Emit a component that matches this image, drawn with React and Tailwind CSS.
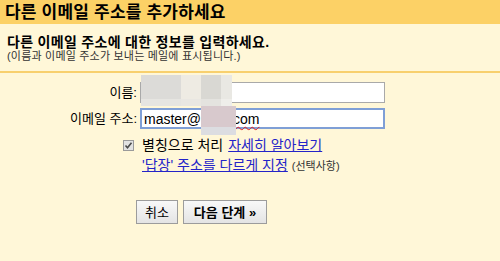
import React from "react";

const font = { fontFamily: '"Liberation Sans", "Noto Sans CJK KR", sans-serif' };

function Field({ label, children, focused }) {
  return (
    <div className="flex items-center">
      <label className="w-[140px] pr-[3px] text-right text-[13px] leading-none text-black">{label}</label>
      <div
        className={
          "relative h-[21px] w-[245px] bg-white " +
          (focused ? "border-2 border-[#7f9fd6]" : "border border-[#a9a9a9]")
        }
      >
        {children}
      </div>
    </div>
  );
}

export default function App() {
  return (
    <div className="h-[261px] w-[500px] overflow-hidden bg-[#fff7d8] text-black" style={font}>
      <div className="flex h-[24px] items-center bg-[#fcd166] px-[5px]">
        <h1 className="text-[17px] font-bold leading-none tracking-[0.2px]">다른 이메일 주소를 추가하세요</h1>
      </div>

      <div className="px-[7px] pt-[10px] pb-[8px]">
        <p className="text-[14px] font-bold leading-[16px] tracking-[0.3px]">다른 이메일 주소에 대한 정보를 입력하세요.</p>
        <p className="text-[11px] leading-[13px] tracking-[0.2px] text-[#333]">(이름과 이메일 주소가 보내는 메일에 표시됩니다.)</p>
      </div>

      <div className="h-[2px] bg-[#f8d06e]" />

      <div className="flex flex-col gap-[5px] pt-[9px]">
        <Field label="이름:">
          <div className="absolute left-[0px] top-[-8px] flex h-[31px]">
            <div className="flex flex-col">
              <div className="h-[24px] w-[40px] bg-[#dcdbd8]" />
              <div className="h-[7px] w-[40px] bg-[#e6e5e1]" />
            </div>
            <div className="flex flex-col">
              <div className="h-[24px] w-[20px] bg-[#eeebe3]" />
              <div className="h-[7px] w-[20px] bg-[#e9e7e2]" />
            </div>
            <div className="flex flex-col">
              <div className="h-[24px] w-[20px] bg-[#d9d8d3]" />
              <div className="h-[7px] w-[20px] bg-[#e4e3df]" />
            </div>
            <div className="flex flex-col">
              <div className="h-[24px] w-[11px] bg-[#e9e8e3]" />
              <div className="h-[7px] w-[11px] bg-[#efeeea]" />
            </div>
          </div>
        </Field>
        <Field label="이메일 주소:" focused>
          <div className="flex h-full items-center pl-[2px] text-[14px] leading-none">
            <span>master@</span>
            <span className="inline-block w-[32px]" />
            <span className="underline decoration-wavy decoration-[#e02020] decoration-1 underline-offset-2">com</span>
          </div>
          <div className="absolute left-[59px] top-[-4px] flex h-[29px] w-[35px] flex-col">
            <div className="h-[21px] bg-[#d8c9cd]" />
            <div className="h-[8px] bg-[#dcdde1]" />
          </div>
        </Field>
      </div>

      <div className="flex flex-col gap-[4px] pt-[8px] pl-[123px] text-[14px] leading-[16px]">
        <div className="flex items-center">
          <span className="flex h-[11px] w-[11px] items-center justify-center border border-[#9a9a9a] bg-[#e2e2e2]">
            <svg width="9" height="9" viewBox="0 0 9 9">
              <path d="M1.5 4.5 L3.5 6.8 L7.5 1.8" fill="none" stroke="#4a4a4a" strokeWidth="1.6" />
            </svg>
          </span>
          <span className="ml-[8px]">별칭으로 처리</span>
          <a className="ml-[5px] text-[#2424c8] underline">자세히 알아보기</a>
        </div>
        <div className="flex items-baseline pl-[19px]">
          <a className="text-[#2424c8] underline">'답장' 주소를 다르게 지정</a>
          <span className="ml-[4px] text-[11px] text-[#333]">(선택사항)</span>
        </div>
      </div>

      <div className="flex gap-[5px] pt-[26px] pl-[136px]">
        <button className="h-[24px] w-[42px] border border-[#9c9c9c] bg-gradient-to-b from-[#f8f8f8] to-[#e4e4e4] text-[13px] leading-none">
          취소
        </button>
        <button className="h-[24px] w-[84px] border border-[#9c9c9c] bg-gradient-to-b from-[#f8f8f8] to-[#e4e4e4] text-[13px] font-bold leading-none">
          다음 단계 »
        </button>
      </div>
    </div>
  );
}
